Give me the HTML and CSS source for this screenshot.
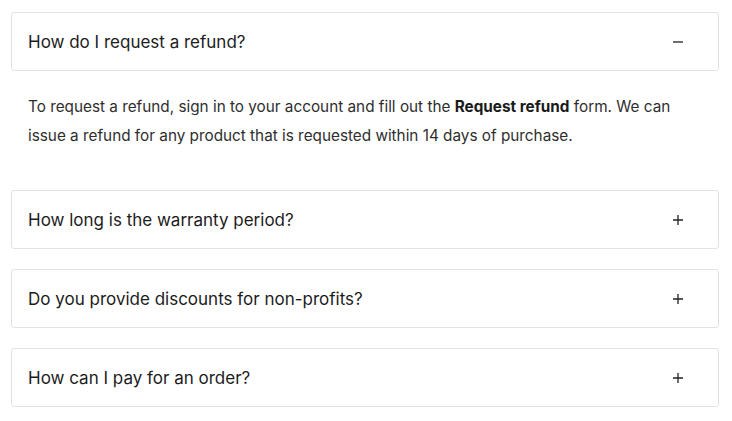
FILE: index.html
```html
<!DOCTYPE html>
<html lang="en">
<head>
<meta charset="utf-8">
<title>FAQ</title>
<link rel="stylesheet" href="styles.css">
</head>
<body>
<div class="faq">
  <div class="item open">
    <div class="question">
      <span class="q-text">How do I request a refund?</span>
      <span class="icon"><svg width="10" height="10" viewBox="0 0 10 10"><path d="M0 5H10" stroke="#222" stroke-width="1.3"/></svg></span>
    </div>
    <p class="answer">To request a refund, sign in to your account and fill out the <strong>Request refund</strong> form. We can issue a refund for any product that is requested within 14 days of purchase.</p>
  </div>
  <div class="item">
    <div class="question">
      <span class="q-text">How long is the warranty period?</span>
      <span class="icon"><svg width="10" height="10" viewBox="0 0 10 10"><path d="M0 5H10M5 0V10" stroke="#222" stroke-width="1.3"/></svg></span>
    </div>
  </div>
  <div class="item">
    <div class="question">
      <span class="q-text">Do you provide discounts for non-profits?</span>
      <span class="icon"><svg width="10" height="10" viewBox="0 0 10 10"><path d="M0 5H10M5 0V10" stroke="#222" stroke-width="1.3"/></svg></span>
    </div>
  </div>
  <div class="item">
    <div class="question">
      <span class="q-text">How can I pay for an order?</span>
      <span class="icon"><svg width="10" height="10" viewBox="0 0 10 10"><path d="M0 5H10M5 0V10" stroke="#222" stroke-width="1.3"/></svg></span>
    </div>
  </div>
</div>
</body>
</html>
```
FILE: styles.css
```css
* { box-sizing: border-box; }
html, body { margin: 0; padding: 0; background: #fff; }
body {
  font-family: Inter, "Noto Sans", sans-serif;
  color: #222;
}
.faq {
  display: flex;
  flex-direction: column;
  gap: 20px;
  padding: 12px 13px 0 11px;
}
.question {
  display: flex;
  align-items: center;
  justify-content: space-between;
  height: 59px;
  padding: 0 35px 0 16px;
  border: 1px solid #e2e2e2;
  border-radius: 3px;
  font-size: 17px;
  color: #1c1c1c;
}
.icon { display: flex; width: 10px; height: 10px; }
.answer {
  margin: 0;
  padding: 21px 30px 20px 17px;
  font-size: 15.3px;
  line-height: 29px;
  color: #2e2e2e;
}
.answer strong { font-weight: 700; color: #1a1a1a; }
```
